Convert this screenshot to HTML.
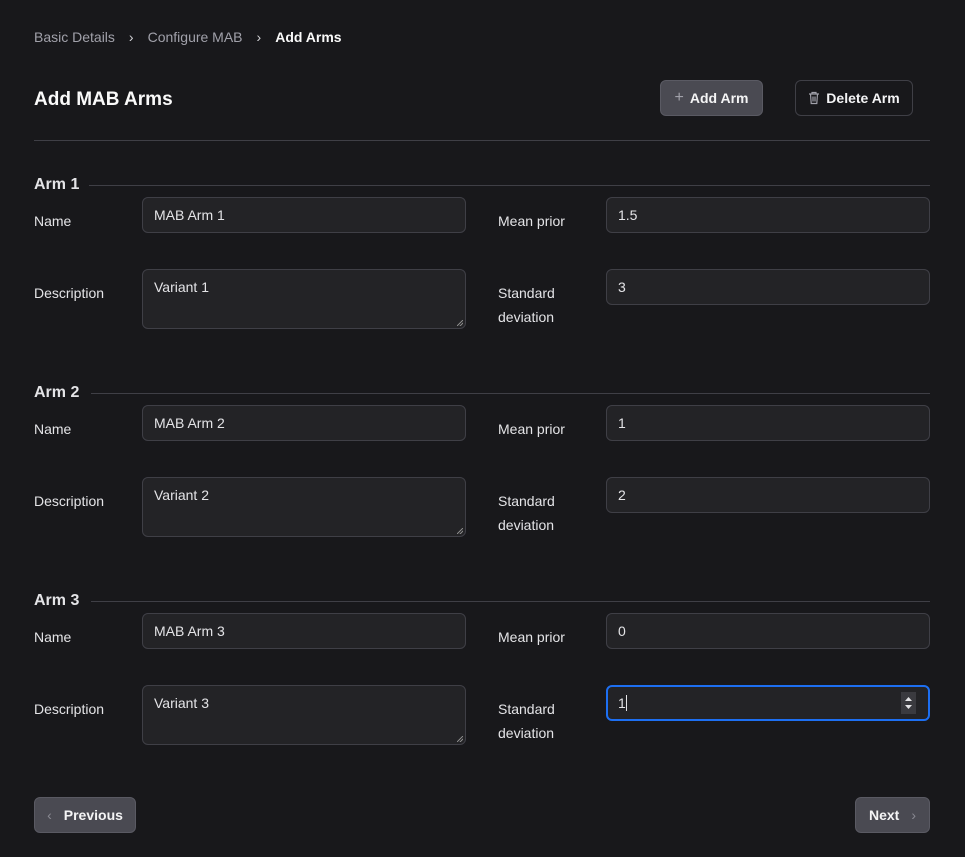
<!DOCTYPE html>
<html><head><style>
*{box-sizing:border-box;margin:0;padding:0}
body{width:965px;height:857px;background:#18181b;font-family:"Liberation Sans",sans-serif;color:#e4e4e7;position:relative;overflow:hidden;font-size:14px}
.a{position:absolute}
.bc{top:29px;left:34px;font-size:14px;color:#a1a1aa}
.bc span{margin-right:14px}
.bc b{color:#fafafa}
.title{top:89px;left:34px;font-size:19px;font-weight:bold;color:#fafafa}
.btn{position:absolute;height:36px;border-radius:6px;font-weight:bold;font-size:14px;color:#f4f4f5;display:flex;align-items:center;justify-content:center;gap:6px}
.hr{height:1px;background:#3f3f46}
.in{position:absolute;background:#232326;border:1px solid #3f3f46;border-radius:6px;padding:9px 11px;font-size:14px;color:#e4e4e7;width:324px}
.ta::after{content:"";position:absolute;right:2px;bottom:2px;width:6px;height:6px;background:linear-gradient(135deg,transparent 45%,#888 45%,#888 55%,transparent 55%,transparent 70%,#888 70%,#888 80%,transparent 80%)}
.lb{position:absolute;font-size:14px;color:#e4e4e7;line-height:24px}
.h{position:absolute;font-size:16px;font-weight:bold;color:#e4e4e7;left:34px}
</style></head><body>
<div class="a bc"><span>Basic Details</span><span style="color:#d4d4d8">›</span><span>Configure MAB</span><span style="color:#d4d4d8">›</span><b>Add Arms</b></div>
<div class="a title">Add MAB Arms</div>
<div class="btn" style="left:660px;top:80px;width:103px;background:#4a4a52;border:1px solid #5a5a63"><span style="color:#a1a1aa;font-weight:normal;font-size:16px">+</span>Add Arm</div>
<div class="btn" style="left:795px;top:80px;width:118px;border:1px solid #3f3f46"><svg width="12" height="14" viewBox="0 0 12 14"><path d="M1 3h10M4 3V1.5h4V3M2.5 3l.7 9.5h5.6L9.5 3M5 5.5v5M7 5.5v5" stroke="#a1a1aa" fill="none" stroke-width="1.2"/></svg>Delete Arm</div>
<div class="a hr" style="left:34px;top:140px;width:896px"></div>

<div class="h" style="top:176px">Arm 1</div><div class="a hr" style="left:89px;top:185px;width:841px"></div>
<div class="lb" style="left:34px;top:209px">Name</div>
<div class="in" style="left:142px;top:197px;height:36px">MAB Arm 1</div>
<div class="lb" style="left:498px;top:209px">Mean prior</div>
<div class="in" style="left:606px;top:197px;height:36px">1.5</div>
<div class="lb" style="left:34px;top:281px">Description</div>
<div class="in ta" style="left:142px;top:269px;height:60px">Variant 1</div>
<div class="lb" style="left:498px;top:281px">Standard<br>deviation</div>
<div class="in" style="left:606px;top:269px;height:36px">3</div>

<div class="h" style="top:384px">Arm 2</div><div class="a hr" style="left:91px;top:393px;width:839px"></div>
<div class="lb" style="left:34px;top:417px">Name</div>
<div class="in" style="left:142px;top:405px;height:36px">MAB Arm 2</div>
<div class="lb" style="left:498px;top:417px">Mean prior</div>
<div class="in" style="left:606px;top:405px;height:36px">1</div>
<div class="lb" style="left:34px;top:489px">Description</div>
<div class="in ta" style="left:142px;top:477px;height:60px">Variant 2</div>
<div class="lb" style="left:498px;top:489px">Standard<br>deviation</div>
<div class="in" style="left:606px;top:477px;height:36px">2</div>

<div class="h" style="top:592px">Arm 3</div><div class="a hr" style="left:91px;top:601px;width:839px"></div>
<div class="lb" style="left:34px;top:625px">Name</div>
<div class="in" style="left:142px;top:613px;height:36px">MAB Arm 3</div>
<div class="lb" style="left:498px;top:625px">Mean prior</div>
<div class="in" style="left:606px;top:613px;height:36px">0</div>
<div class="lb" style="left:34px;top:697px">Description</div>
<div class="in ta" style="left:142px;top:685px;height:60px">Variant 3</div>
<div class="lb" style="left:498px;top:697px">Standard<br>deviation</div>
<div class="in" style="left:606px;top:685px;height:36px;border:2px solid #1d6ff2;padding:8px 10px">1<span style="display:inline-block;width:1px;height:16px;background:#e4e4e7;vertical-align:-3px"></span>
<div class="a" style="right:12px;top:5px;width:15px;height:22px;background:#3a3a3f"><svg width="15" height="22"><path d="M4 9l3.5-4 3.5 4zM4 13l3.5 4 3.5-4z" fill="#e4e4e7"/></svg></div></div>

<div class="btn" style="left:34px;top:797px;width:102px;background:#4a4a52;border:1px solid #5a5a63;gap:12px"><span style="color:#8a8a93;font-weight:normal">‹</span>Previous</div>
<div class="btn" style="left:855px;top:797px;width:75px;background:#4a4a52;border:1px solid #5a5a63;gap:12px">Next<span style="color:#8a8a93;font-weight:normal">›</span></div>
</body></html>
